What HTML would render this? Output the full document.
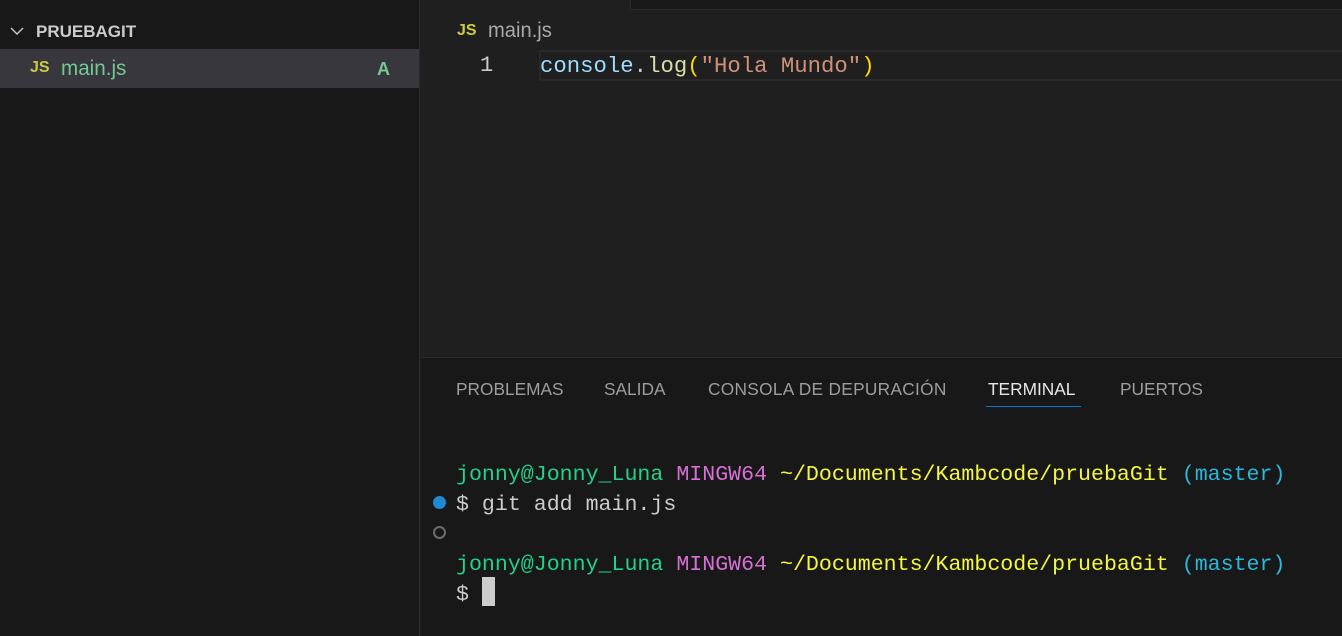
<!DOCTYPE html>
<html><head><style>
*{margin:0;padding:0;box-sizing:border-box}
body{width:1342px;height:636px;overflow:hidden;background:#1f1f1f;font-family:"Liberation Sans",sans-serif;position:relative}
.sb{position:absolute;left:0;top:0;width:420px;height:636px;background:#181818;border-right:1px solid #2b2b2b}
.abs{position:absolute;white-space:pre}
.mono{font-family:"Liberation Mono",monospace}
</style></head><body>
<div class="sb">
  <svg class="abs" style="left:9px;top:24px" width="16" height="14"><path d="M2 4 L8 10 L14 4" stroke="#ccc" stroke-width="1.4" fill="none"/></svg>
  <div class="abs" style="left:36px;top:22px;font-size:17px;font-weight:bold;color:#ccc">PRUEBAGIT</div>
  <div class="abs" style="left:0;top:49px;width:419px;height:39px;background:#37373d"></div>
  <div class="abs" style="left:30px;top:59px;font-size:16px;font-weight:bold;color:#cbcb41">JS</div>
  <div class="abs" style="left:61px;top:56px;font-size:21.5px;color:#73c991;transform:scaleX(0.96);transform-origin:left">main.js</div>
  <div class="abs" style="left:377px;top:59px;font-size:18px;font-weight:bold;color:#73c991">A</div>
</div>
<div class="abs" style="left:421px;top:0;width:210px;height:10px;background:#1f1f1f"></div>
<div class="abs" style="left:630px;top:0;width:712px;height:10px;background:#181818;border-left:1px solid #2b2b2b;border-bottom:1px solid #2b2b2b"></div>
<div class="abs" style="left:457px;top:22px;font-size:16px;font-weight:bold;color:#cbcb41">JS</div>
<div class="abs" style="left:488px;top:19px;font-size:21px;color:#a9a9a9;transform:scaleX(0.96);transform-origin:left">main.js</div>
<div class="abs" style="left:539px;top:50px;width:803px;height:31px;border:2px solid #282828;border-right:none"></div>
<div class="abs mono" style="left:480px;top:53px;font-size:22px;color:#ccc">1</div>
<div class="abs mono" style="left:540px;top:53px;font-size:22.3px;color:#9cdcfe">console<span style="color:#ccc">.</span><span style="color:#dcdcaa">log</span><span style="color:#ffd700">(</span><span style="color:#ce9178">"Hola Mundo"</span><span style="color:#ffd700">)</span></div>
<div class="abs" style="left:421px;top:357px;width:921px;height:279px;background:#181818;border-top:1px solid #2b2b2b"></div>
<div class="abs" style="left:456px;top:379px;font-size:17.3px;color:#9d9d9d">PROBLEMAS</div>
<div class="abs" style="left:604px;top:379px;font-size:17.3px;color:#9d9d9d">SALIDA</div>
<div class="abs" style="left:708px;top:379px;font-size:17.3px;color:#9d9d9d;letter-spacing:0.3px">CONSOLA DE DEPURACIÓN</div>
<div class="abs" style="left:988px;top:379px;font-size:17.3px;color:#e7e7e7">TERMINAL</div>
<div class="abs" style="left:986px;top:406px;width:95px;height:1px;background:#0078d4"></div>
<div class="abs" style="left:1120px;top:379px;font-size:17.3px;color:#9d9d9d">PUERTOS</div>
<div class="abs mono" style="left:456px;top:460px;font-size:21.6px;line-height:30px;color:#ccc"><span style="color:#23d18b">jonny@Jonny_Luna</span> <span style="color:#d670d6">MINGW64</span> <span style="color:#f5f543">~/Documents/Kambcode/pruebaGit</span> <span style="color:#29b8db">(master)</span>
$ git add main.js

<span style="color:#23d18b">jonny@Jonny_Luna</span> <span style="color:#d670d6">MINGW64</span> <span style="color:#f5f543">~/Documents/Kambcode/pruebaGit</span> <span style="color:#29b8db">(master)</span>
$ </div>
<div class="abs" style="left:482px;top:577px;width:13px;height:29px;background:#cccccc"></div>
<div class="abs" style="left:433px;top:496px;width:13px;height:13px;border-radius:50%;background:#1f8ad2"></div>
<div class="abs" style="left:433px;top:526px;width:13px;height:13px;border-radius:50%;border:2px solid #6b6b6b"></div>
</body></html>
